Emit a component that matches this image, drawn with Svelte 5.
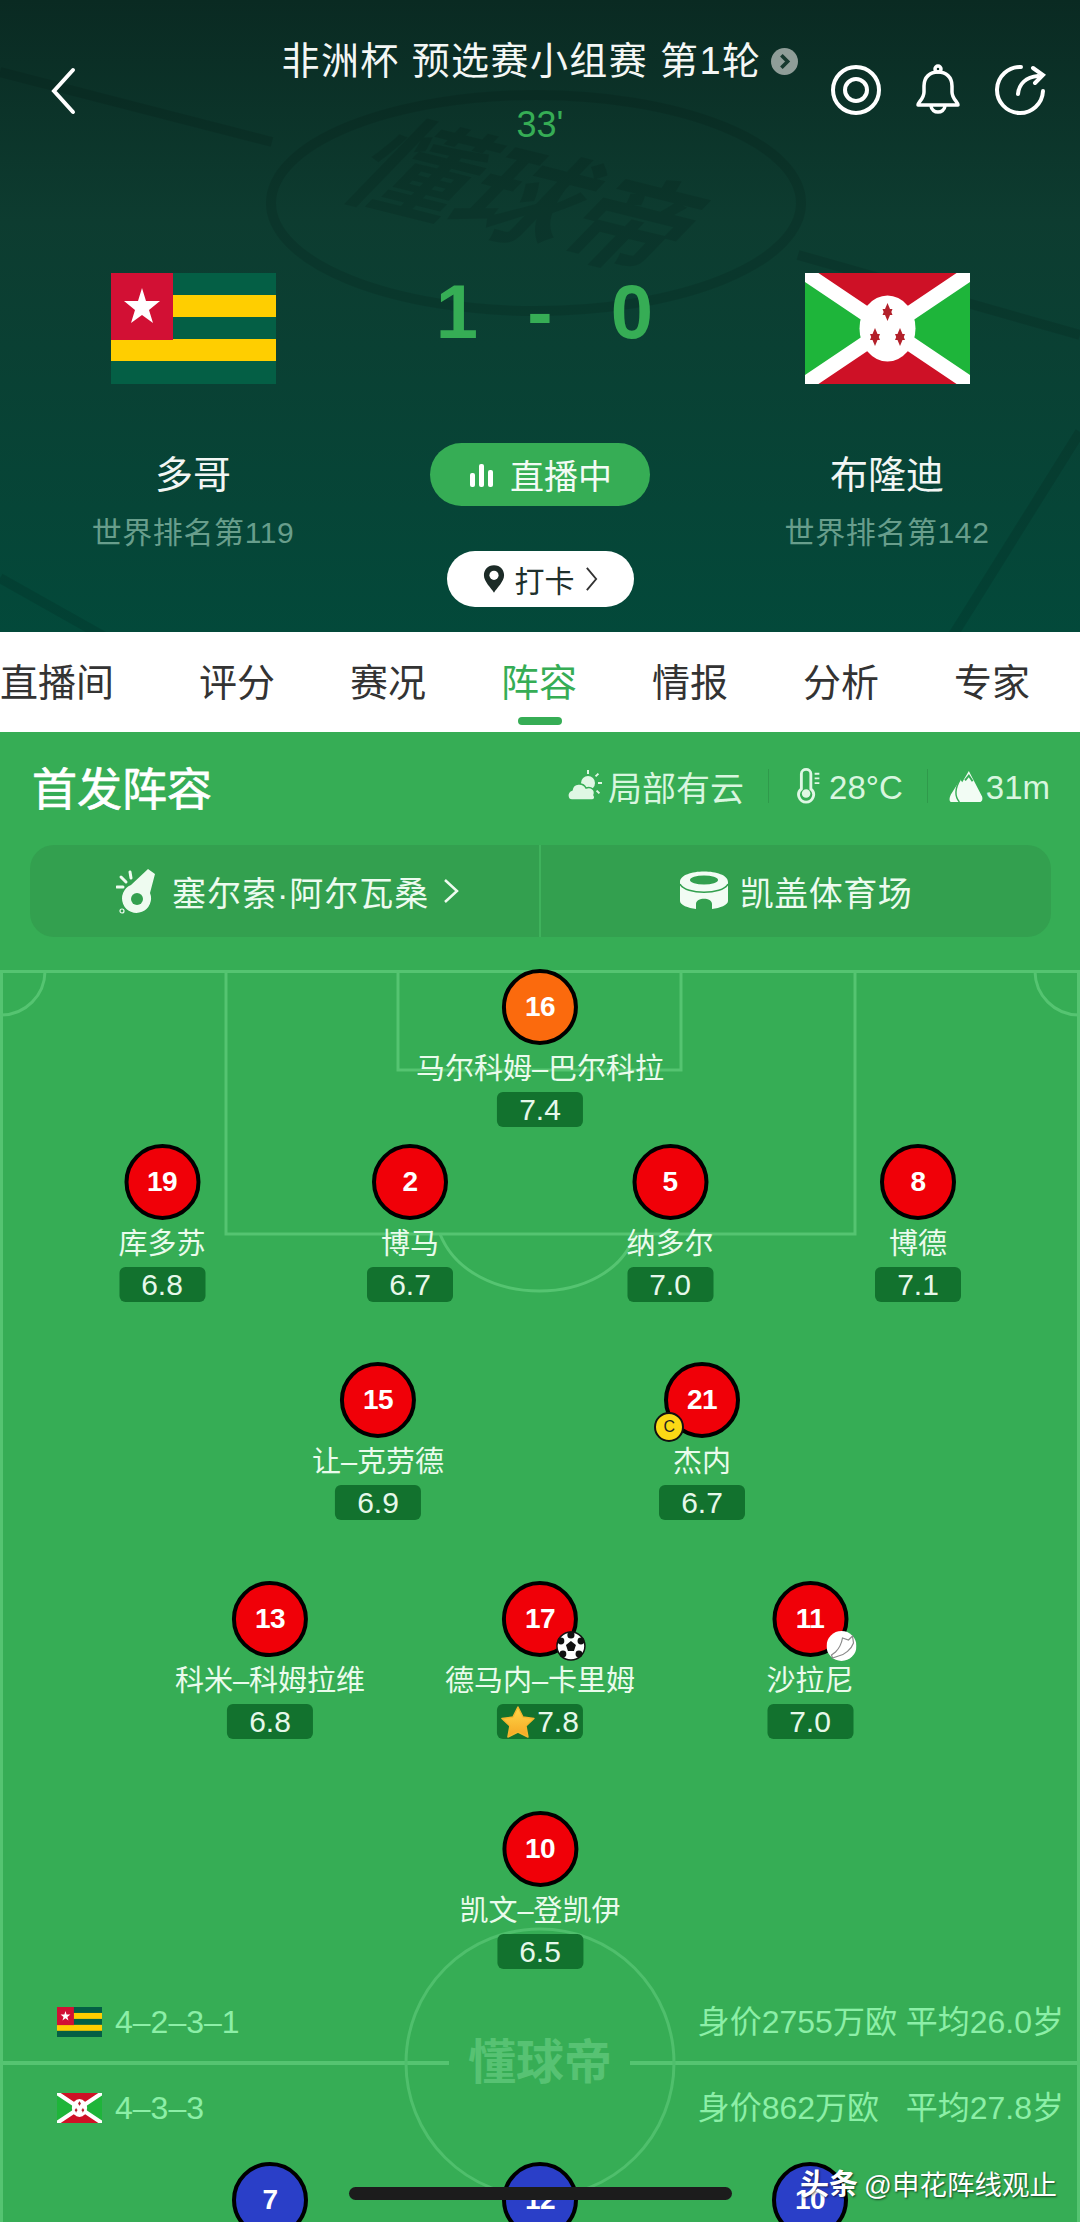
<script lang="ts">
	// Player positions are the content of the pitch: x is the centre of the shirt, y its centre (from pitch top)
	const players = [
		{ no: 16, name: '马尔科姆–巴尔科拉', rating: '7.4', x: 540, y: 37, kit: 'keeper' },
		{ no: 19, name: '库多苏', rating: '6.8', x: 162, y: 212, kit: 'home' },
		{ no: 2, name: '博马', rating: '6.7', x: 410, y: 212, kit: 'home' },
		{ no: 5, name: '纳多尔', rating: '7.0', x: 670, y: 212, kit: 'home' },
		{ no: 8, name: '博德', rating: '7.1', x: 918, y: 212, kit: 'home' },
		{ no: 15, name: '让–克劳德', rating: '6.9', x: 378, y: 430, kit: 'home' },
		{ no: 21, name: '杰内', rating: '6.7', x: 702, y: 430, kit: 'home', badge: 'captain' },
		{ no: 13, name: '科米–科姆拉维', rating: '6.8', x: 270, y: 649, kit: 'home' },
		{ no: 17, name: '德马内–卡里姆', rating: '7.8', x: 540, y: 649, kit: 'home', badge: 'ball', star: true },
		{ no: 11, name: '沙拉尼', rating: '7.0', x: 810, y: 649, kit: 'home', badge: 'boot' },
		{ no: 10, name: '凯文–登凯伊', rating: '6.5', x: 540, y: 879, kit: 'home' },
		{ no: 7, x: 270, y: 1230, kit: 'away' },
		{ no: 12, x: 540, y: 1230, kit: 'away' },
		{ no: 10, x: 810, y: 1230, kit: 'away' }
	];

	const tabs = ['直播间', '评分', '赛况', '阵容', '情报', '分析', '专家'];

	// centres of the three six-pointed stars on the Burundi flag
	const stars = [
		[82.5, 39],
		[70, 64],
		[95, 64]
	];
</script>

{#snippet togo()}
	<svg viewBox="0 0 165 111" preserveAspectRatio="none">
		<rect width="165" height="111" fill="#045f45" />
		<rect y="22" width="165" height="22" fill="#ffce00" />
		<rect y="66" width="165" height="22" fill="#ffce00" />
		<rect width="62" height="67" fill="#d21034" />
		<polygon points="31,15 35,28 49,28 38,37 42,50 31,42 20,50 24,37 13,28 27,28" fill="#fff" />
	</svg>
{/snippet}

{#snippet burundi()}
	<svg viewBox="0 0 165 111" preserveAspectRatio="none">
		<rect width="165" height="111" fill="#ce1126" />
		<polygon points="0,0 82,55 0,111" fill="#1eb53a" />
		<polygon points="165,0 82,55 165,111" fill="#1eb53a" />
		<path d="M0 0 L165 111 M165 0 L0 111" stroke="#fff" stroke-width="15" />
		<ellipse cx="82.5" cy="55.5" rx="28" ry="33" fill="#fff" />
		{#each stars as [cx, cy]}
			<g fill="#b3202a" transform="translate({cx} {cy})">
				<polygon points="0,-9 5,3 -5,3" />
				<polygon points="0,9 5,-3 -5,-3" />
			</g>
		{/each}
	</svg>
{/snippet}

<div class="page">
	<header class="hero">
		<!-- faint pitch drawn into the header background -->
		<svg class="hero-bg" viewBox="0 0 1080 632">
			<g fill="none" stroke="#000" stroke-opacity="0.1" stroke-width="10">
				<ellipse cx="536" cy="203" rx="265" ry="108" />
				<path d="M0 72 L272 142" />
				<path d="M798 255 L1080 335" />
				<path d="M1080 432 L950 640" />
				<path d="M0 578 L110 640" />
			</g>
			<text class="hero-mark" transform="translate(335 192) rotate(14) skewX(-30)">懂球帝</text>
		</svg>

		<div class="topbar">
			<svg class="back" viewBox="0 0 26 48" width="26" height="48">
				<path d="M23 3 L4 24 L23 45" fill="none" stroke="#fff" stroke-width="4" stroke-linecap="round" />
			</svg>
			<div class="match">
				<div class="title">
					<span>非洲杯 预选赛小组赛 第1轮</span>
					<span class="more">
						<svg viewBox="0 0 26 26" width="27" height="27">
							<circle cx="13" cy="13" r="13" fill="#8f9d98" />
							<path d="M10 7 L16 13 L10 19" fill="none" stroke="#17392f" stroke-width="3.5" />
						</svg>
					</span>
				</div>
				<div class="minute">33'</div>
			</div>
			<div class="actions">
				<svg viewBox="0 0 52 52" width="52" height="52">
					<g fill="none" stroke="#fff" stroke-width="4">
						<circle cx="26" cy="26" r="23" />
						<circle cx="26" cy="26" r="11" />
					</g>
				</svg>
				<svg viewBox="0 0 46 52" width="46" height="52">
					<g fill="none" stroke="#fff" stroke-width="3.5" stroke-linejoin="round">
						<circle cx="23" cy="5" r="3" />
						<path d="M3 41 C3 38 9 35 9 28 L9 22 C9 13 15 8 23 8 C31 8 37 13 37 22 L37 28 C37 35 43 38 43 41 Z" />
						<path d="M16 42 C17 50 29 50 30 42" />
					</g>
				</svg>
				<svg viewBox="0 0 52 52" width="52" height="52">
					<g fill="none" stroke="#fff" stroke-width="4" stroke-linecap="round">
						<path d="M27 3 A23 23 0 1 0 49 27" />
						<path d="M24 30 C25 20 32 13 44 12" />
						<path d="M39 4 L49 11 L41 19" />
					</g>
				</svg>
			</div>
		</div>

		<div class="scoreboard">
			<div class="team">
				<div class="flag">{@render togo()}</div>
				<div class="team-name">多哥</div>
				<div class="rank">世界排名第119</div>
			</div>
			<div class="centre">
				<div class="score"><span>1</span><span>-</span><span>0</span></div>
				<div class="live">
					<svg viewBox="0 0 28 28" width="28" height="28">
						<g fill="#fff">
							<rect x="2" y="12" width="5" height="14" rx="2" />
							<rect x="11" y="3" width="5" height="23" rx="2" />
							<rect x="20" y="9" width="5" height="17" rx="2" />
						</g>
					</svg>
					直播中
				</div>
				<div class="checkin">
					<svg viewBox="0 0 24 32" width="22" height="30">
						<path d="M12 1 C5 1 1 6 1 12 C1 19 9 26 12 31 C15 26 23 19 23 12 C23 6 19 1 12 1 Z" fill="#1c2b27" />
						<circle cx="12" cy="12" r="5" fill="#fff" />
					</svg>
					<span>打卡</span>
					<svg viewBox="0 0 14 28" width="13" height="26">
						<path d="M2 2 L12 14 L2 26" fill="none" stroke="#333" stroke-width="2" />
					</svg>
				</div>
			</div>
			<div class="team">
				<div class="flag">{@render burundi()}</div>
				<div class="team-name">布隆迪</div>
				<div class="rank">世界排名第142</div>
			</div>
		</div>
	</header>

	<nav class="tabs">
		{#each tabs as tab}
			<div class="tab" class:active={tab === '阵容'}>{tab}</div>
		{/each}
	</nav>

	<main class="lineup">
		<div class="head">
			<h2>首发阵容</h2>
			<div class="conditions">
				<svg viewBox="0 0 36 32" width="36" height="32">
					<g fill="#dff7e4">
						<circle cx="22" cy="13" r="7" />
						<path d="M6 30 C1 30 0 22 6 20 C7 13 17 12 20 18 C25 16 30 20 28 25 C30 28 28 30 26 30 Z" stroke="#36ad55" stroke-width="1.5" />
						<rect x="21" y="0" width="2" height="4" />
						<rect x="32" y="12" width="4" height="2" />
						<rect x="30" y="3" width="2" height="4" transform="rotate(45 31 5)" />
						<rect x="31" y="20" width="2" height="4" transform="rotate(-45 32 22)" />
					</g>
				</svg>
				<span>局部有云</span>
				<i class="sep"></i>
				<svg class="thermo" viewBox="0 0 24 38" width="24" height="36">
					<g fill="none" stroke="#dff7e4" stroke-width="3">
						<path d="M5 22 L5 6 C5 0 15 0 15 6 L15 22 C21 27 17 36 10 36 C3 36 -1 27 5 22 Z" />
						<path d="M19 6 H24 M19 11 H24 M19 16 H24" stroke-width="2" />
					</g>
					<circle cx="10" cy="27" r="4.5" fill="#dff7e4" />
				</svg>
				<span class="num">28°C</span>
				<i class="sep"></i>
				<svg class="peak" viewBox="0 0 36 34" width="34" height="34">
					<path d="M3 34 C0 34 0 30 2 26 L12 10 L14 13 L21 1 L35 28 C36 31 35 34 32 34 Z" fill="#f2fcf4" />
					<path d="M12 10 C6 20 6 28 11 34" fill="none" stroke="#36ad55" stroke-width="1.5" />
					<path d="M17 11 L21 6 L25 12" fill="none" stroke="#36ad55" stroke-width="2" />
				</svg>
				<span class="num">31m</span>
			</div>
		</div>

		<div class="meta">
			<div class="meta-cell referee">
				<svg viewBox="0 0 42 46" width="42" height="46">
					<path d="M32 1 L39 6 L34 25 A14.5 14.5 0 1 1 15 17 Z" fill="#eefbf0" />
					<g stroke="#eefbf0" stroke-width="3" stroke-linecap="round">
						<path d="M14 4 L15 10" />
						<path d="M5 9 L10 14" />
						<path d="M1 19 L7 19" />
					</g>
					<circle cx="6" cy="43" r="2" fill="none" stroke="#eefbf0" stroke-width="1.2" />
					<circle cx="21" cy="31" r="6" fill="#33a04f" />
				</svg>
				<span class="ref-name">塞尔索·阿尔瓦桑</span>
				<svg class="chev" viewBox="0 0 16 26" width="16" height="26">
					<path d="M2 2 L14 13 L2 24" fill="none" stroke="#eefbf0" stroke-width="2.5" />
				</svg>
			</div>
			<div class="meta-cell stadium">
				<svg viewBox="0 0 48 40" width="48" height="40">
					<path d="M0 11 C0 -3 48 -3 48 11 V30 C48 34 40 37 32 38 V33 C32 26 16 26 16 33 V38 C8 37 0 34 0 30 Z" fill="#f2fcf4" />
					<ellipse cx="24" cy="9" rx="14" ry="4.5" fill="#33a04f" />
					<path d="M0 13 C6 24 42 24 48 13" fill="none" stroke="#33a04f" stroke-width="1.5" />
				</svg>
				<span class="stadium-name">凯盖体育场</span>
			</div>
		</div>

		<section class="pitch">
			<svg class="lines" viewBox="0 0 1080 1252">
				<g fill="none" stroke="#55c471" stroke-width="3">
					<path d="M1.5 1252 V1.5 H1078.5 V1252" />
					<path d="M226 1.5 V264 H855 V1.5" />
					<path d="M398 1.5 V100 H681 V1.5" />
					<path d="M440 264 C470 340 610 340 635 264" />
					<path d="M1.5 45 A44 44 0 0 0 45 1.5" />
					<path d="M1035 1.5 A44 44 0 0 0 1078.5 45" />
					<path d="M0 1093 H449 M630 1093 H1080" stroke-width="4" />
					<circle cx="540" cy="1093" r="134" stroke="#4fbf6c" />
				</g>
			</svg>
			<div class="pitch-mark">懂球帝</div>

			{#each players as p}
				<div class="player" style="left: {p.x}px; top: {p.y - 38}px">
					<div class="shirt {p.kit}">
						{p.no}
						{#if p.badge === 'captain'}
							<span class="badge captain">C</span>
						{:else if p.badge === 'ball'}
							<svg class="badge ball" viewBox="0 0 30 30">
								<circle cx="15" cy="15" r="14" fill="#fff" stroke="#111" stroke-width="1.5" />
								<polygon points="15,10 20,14 18,20 12,20 10,14" fill="#111" />
								<circle cx="15" cy="4" r="3.6" fill="#111" />
								<circle cx="5" cy="10" r="3.4" fill="#111" />
								<circle cx="25" cy="10" r="3.4" fill="#111" />
								<circle cx="7" cy="23" r="3.4" fill="#111" />
								<circle cx="23" cy="23" r="3.4" fill="#111" />
							</svg>
						{:else if p.badge === 'boot'}
							<svg class="badge boot" viewBox="0 0 30 30">
								<circle cx="15" cy="15" r="15" fill="#fff" />
								<path d="M5 24 L9 21 C13 17 15 13 16 7 L22 9 L26 5 L27 12 C25 18 18 24 12 25 L6 27 Z" fill="none" stroke="#8a8a8a" stroke-width="1.2" />
							</svg>
						{/if}
					</div>
					{#if p.name}
						<div class="name">{p.name}</div>
						<div class="rating">
							{#if p.star}
								<svg viewBox="0 0 34 32" width="34" height="32">
									<defs>
										<linearGradient id="gold" x1="0" y1="0" x2="0" y2="1">
											<stop offset="0" stop-color="#ffd84a" />
											<stop offset="1" stop-color="#f5a623" />
										</linearGradient>
									</defs>
									<polygon points="17,1 22,11 33,12.5 25,20 27,31 17,26 7,31 9,20 1,12.5 12,11" fill="url(#gold)" stroke="#f5b62e" stroke-width="1.5" stroke-linejoin="round" />
								</svg>
							{/if}
							{p.rating}
						</div>
					{/if}
				</div>
			{/each}

			<div class="formation home-row">
				<div class="mini-flag">{@render togo()}</div>
				<span class="shape">4–2–3–1</span>
				<span class="worth">身价2755万欧</span>
				<span class="age">平均26.0岁</span>
			</div>
			<div class="formation away-row">
				<div class="mini-flag">{@render burundi()}</div>
				<span class="shape">4–3–3</span>
				<span class="worth">身价862万欧</span>
				<span class="age">平均27.8岁</span>
			</div>

			<div class="home-bar"></div>
			<div class="watermark"><b>头条</b><span>@申花阵线观止</span></div>
		</section>
	</main>
</div>

<style>
	:global(body) {
		margin: 0;
		overflow: hidden;
	}

	.page {
		width: 1080px;
		height: 2222px;
		overflow: hidden;
		font-family: 'Liberation Sans', 'Noto Sans CJK SC', sans-serif;
		background: #36ad55;
	}

	/* header */
	.hero {
		position: relative;
		height: 632px;
		overflow: hidden;
		background: linear-gradient(180deg, #0a2a22 0%, #0d3c30 35%, #03493a 100%);
		color: #fff;
	}
	.hero-bg {
		position: absolute;
		inset: 0;
		width: 1080px;
		height: 632px;
	}
	.hero-mark {
		font-size: 110px;
		font-weight: 700;
		fill: #000;
		fill-opacity: 0.1;
	}

	.topbar {
		position: relative;
		display: grid;
		grid-template-columns: 1fr auto 1fr;
		padding-top: 39px;
		height: 273px;
		box-sizing: border-box;
	}
	.back {
		margin: 28px 0 0 50px;
	}
	.match {
		text-align: center;
	}
	.title {
		font-size: 38px;
		line-height: 44px;
		letter-spacing: 1.4px;
		display: flex;
		align-items: center;
		gap: 10px;
		color: #f4f7f5;
	}
	.more {
		display: flex;
	}
	.minute {
		color: #36ad55;
		font-size: 36px;
		line-height: 44px;
		margin-top: 20px;
	}
	.actions {
		display: flex;
		justify-content: flex-end;
		gap: 33px;
		padding: 25px 34px 0 0;
		align-items: flex-start;
	}

	.scoreboard {
		position: relative;
		display: grid;
		grid-template-columns: 386px 308px 386px;
	}
	.team {
		display: flex;
		flex-direction: column;
		align-items: center;
	}
	.flag {
		width: 165px;
		height: 111px;
		margin-bottom: 66px;
	}
	.flag svg,
	.mini-flag svg {
		display: block;
		width: 100%;
		height: 100%;
	}
	.team-name {
		font-size: 38px;
		line-height: 50px;
		color: #f2f6f4;
	}
	.rank {
		font-size: 30px;
		line-height: 40px;
		margin-top: 13px;
		letter-spacing: 0.6px;
		color: #689e8c;
	}
	.centre {
		display: flex;
		flex-direction: column;
		align-items: center;
	}
	.score {
		display: grid;
		grid-template-columns: 60px 106px 78px;
		justify-items: center;
		width: 244px;
		height: 170px;
		font-size: 76px;
		line-height: 78px;
		font-weight: 700;
		color: #36ad55;
		margin-left: 18px;
	}
	.live {
		display: flex;
		align-items: center;
		justify-content: center;
		gap: 14px;
		width: 220px;
		height: 63px;
		border-radius: 32px;
		background: #36ad55;
		font-size: 34px;
		color: #f2fbf4;
	}
	.checkin {
		display: flex;
		align-items: center;
		justify-content: center;
		gap: 10px;
		width: 187px;
		height: 56px;
		margin-top: 45px;
		border-radius: 28px;
		background: #fff;
		font-size: 30px;
		color: #20302c;
	}

	/* tabs */
	.tabs {
		display: flex;
		height: 100px;
		background: #fff;
		gap: 75px;
		white-space: nowrap;
	}
	.tab {
		position: relative;
		font-size: 38px;
		line-height: 102px;
		color: #333;
		width: 76px;
		display: flex;
		justify-content: center;
	}
	.tab:first-child {
		width: 124px;
		justify-content: flex-start;
	}
	.tab.active {
		color: #36ad55;
	}
	.tab.active::after {
		content: '';
		position: absolute;
		left: 17px;
		width: 44px;
		bottom: 7px;
		height: 8px;
		border-radius: 4px;
		background: #36ad55;
	}

	/* lineup */
	.lineup {
		background: #36ad55;
	}
	.head {
		display: flex;
		align-items: center;
		justify-content: space-between;
		height: 56px;
		padding: 26px 30px 0 32px;
	}
	h2 {
		margin: 0;
		font-size: 45px;
		font-weight: 400;
		-webkit-text-stroke: 0.7px #fff;
		color: #fff;
	}
	.conditions {
		display: flex;
		align-items: center;
		gap: 6px;
		font-size: 34px;
		color: #d8f6df;
	}
	.conditions .num {
		font-size: 33px;
		padding-top: 3px;
	}
	.sep {
		width: 1px;
		height: 34px;
		margin: 0 20px 0 18px;
		background: #2f9a4b;
	}
	.thermo {
		margin: 0 3px 0 1px;
	}
	.peak {
		margin: 0 -3px 0 -5px;
	}
	.meta {
		display: grid;
		grid-template-columns: 511px 1fr;
		height: 92px;
		margin: 31px 29px 33px 30px;
		border-radius: 24px;
		background: #33a04f;
		overflow: hidden;
		font-size: 34px;
		color: #ecfbef;
	}
	.meta-cell {
		display: flex;
		align-items: center;
		justify-content: center;
		gap: 12px;
	}
	.referee {
		border-right: 2px solid #3fb25c;
		justify-content: flex-start;
		padding-left: 86px;
		gap: 14px;
	}
	.ref-name {
		letter-spacing: 1px;
	}
	.stadium-name {
		letter-spacing: 0.5px;
	}

	/* pitch: markings and players sit on a free canvas */
	.pitch {
		position: relative;
		height: 1252px;
	}
	.lines {
		position: absolute;
		inset: 0;
		width: 1080px;
		height: 1252px;
	}
	.pitch-mark {
		position: absolute;
		left: 459px;
		top: 1058px;
		width: 162px;
		text-align: center;
		line-height: 70px;
		font-size: 48px;
		font-weight: 700;
		color: #57c273;
		white-space: nowrap;
	}
	.player {
		position: absolute;
		transform: translateX(-50%);
		display: flex;
		flex-direction: column;
		align-items: center;
		white-space: nowrap;
	}
	.shirt {
		position: relative;
		box-sizing: border-box;
		width: 76px;
		height: 76px;
		border: 4px solid #000;
		border-radius: 50%;
		display: flex;
		align-items: center;
		justify-content: center;
		font-size: 28px;
		font-weight: 700;
		letter-spacing: -0.5px;
		color: #fff;
	}
	.shirt.keeper {
		background: #fb6a0d;
	}
	.shirt.home {
		background: #f00008;
	}
	.shirt.away {
		background: #2a3fc8;
	}
	.badge {
		position: absolute;
		width: 30px;
		height: 30px;
	}
	.captain {
		box-sizing: border-box;
		left: -14px;
		top: 46px;
		border: 2px solid #111;
		border-radius: 50%;
		background: #fbd915;
		color: #222;
		font-size: 16px;
		font-weight: 400;
		line-height: 26px;
		text-align: center;
	}
	.ball,
	.boot {
		left: 50px;
		top: 46px;
	}
	.name {
		margin-top: 6px;
		font-size: 29px;
		line-height: 36px;
		color: #eafbec;
	}
	.rating {
		display: flex;
		align-items: center;
		justify-content: center;
		gap: 2px;
		width: 86px;
		height: 35px;
		margin-top: 5px;
		border-radius: 6px;
		background: #12722e;
		font-size: 30px;
		color: #e6f8ea;
	}

	.formation {
		position: absolute;
		left: 57px;
		right: 16px;
		display: flex;
		align-items: center;
		font-size: 32px;
		line-height: 40px;
		color: #8cefa7;
	}
	.home-row {
		top: 1032px;
	}
	.away-row {
		top: 1118px;
	}
	.mini-flag {
		width: 45px;
		height: 30px;
		margin-right: 13px;
	}
	.shape {
		flex: 1;
	}
	.worth {
		width: 208px;
	}

	.home-bar {
		position: absolute;
		left: 349px;
		top: 1217px;
		width: 383px;
		height: 13px;
		border-radius: 7px;
		background: #1c1c1c;
	}
	.watermark {
		position: absolute;
		left: 800px;
		top: 1195px;
		font-size: 29px;
		line-height: 40px;
		color: #fff;
		white-space: nowrap;
		text-shadow: 1px 1px 2px rgba(0, 0, 0, 0.6);
	}
	.watermark span {
		font-size: 27.5px;
		margin-left: 6px;
	}
</style>
